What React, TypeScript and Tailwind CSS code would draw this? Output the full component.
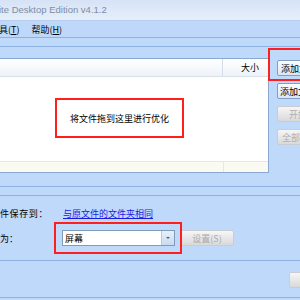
export default function App() {
  return (
    <div className="relative w-[300px] h-[300px] overflow-hidden bg-[#bfd9fb] text-[9px] leading-none text-black font-['Noto_Sans_CJK_SC',sans-serif]">
      {/* title bar */}
      <div className="h-[21px] flex items-center bg-gradient-to-b from-[#d6e3f6] to-[#e6eefa] border-b border-[#b5cdee] text-[#7f8da2] text-[9.5px] font-['Liberation_Sans',sans-serif]">
        <span className="-ml-px">ite Desktop Edition v4.1.2</span>
      </div>

      {/* menu bar */}
      <div className="h-[16px] flex items-center bg-[#bfd8f9]">
        <span className="-ml-px">具(<span className="underline">T</span>)</span>
        <span className="ml-[12px]">帮助(<span className="underline">H</span>)</span>
      </div>

      {/* toolbar separators */}
      <div className="h-[9px] border-t border-[#8fb1df]" />
      <div className="h-[12px] border-t border-[#8fb1df]" />

      {/* main area */}
      <div className="flex h-[115px]">
        <div className="w-[269px] shrink-0 flex flex-col bg-white border border-l-0 border-[#8aa8d0]">
          <div className="h-[18px] flex bg-gradient-to-b from-white to-[#eef3f9] border-b border-[#d8e0ea]">
            <div className="flex-1 border-r border-[#d5dde8]" />
            <div className="w-[45px] flex items-center justify-end pr-[9px]">大小</div>
          </div>
          <div className="relative flex-1">
            <div className="absolute left-[55px] top-[21px] w-[129px] h-[40px] border-2 border-[#ff1f1f] flex items-center justify-center text-[9px]">
              将文件拖到这里进行优化
            </div>
          </div>
          <div className="h-[11px] flex bg-[#fbfaf2] border-t border-[#ece7d6]">
            <div className="flex-1 border-r border-[#ece7d6]" />
            <div className="w-[44px]" />
          </div>
        </div>

        <div className="flex flex-col items-start gap-[7px] pl-[8px] pt-[2px]">
          <button className="shrink-0 h-[16px] w-[56px] flex items-center whitespace-nowrap pl-[3px] rounded-[2px] border border-[#7f9ec9] bg-gradient-to-b from-[#fbfdff] to-[#dbe6f4]">
            添加文件
          </button>
          <button className="shrink-0 h-[16px] w-[56px] flex items-center whitespace-nowrap pl-[2px] rounded-[2px] border border-[#7f9ec9] bg-gradient-to-b from-[#fbfdff] to-[#dbe6f4]">
            添加文件夹
          </button>
          <button className="shrink-0 h-[16px] w-[56px] flex items-center whitespace-nowrap pl-[11px] rounded-[2px] border border-[#c9cdd3] bg-gradient-to-b from-[#f6f6f6] to-[#d9d9d9] text-[#b0b0b0]">
            开始优化
          </button>
          <button className="shrink-0 h-[16px] w-[56px] flex items-center whitespace-nowrap pl-[4px] rounded-[2px] border border-[#c9cdd3] bg-gradient-to-b from-[#f6f6f6] to-[#d9d9d9] text-[#b0b0b0]">
            全部清除
          </button>
        </div>
      </div>

      {/* lower separators */}
      <div className="h-[13px]" />
      <div className="h-[9px] border-t border-[#8fb1df]" />
      <div className="border-t border-[#8fb1df]" />

      {/* save location */}
      <div className="h-[34px] flex items-center pt-[1px]">
        <span className="w-[63px] tracking-[0.6px]">件保存到：</span>
        <span className="text-[#1a1ae6] underline">与原文件的文件夹相同</span>
      </div>

      {/* output row */}
      <div className="h-[16px] flex items-center">
        <span className="w-[62px]">为：</span>
        <div className="w-[113px] h-[16px] flex items-center bg-white border border-[#7f9db9]">
          <span className="flex-1 pl-[2px]">屏幕</span>
          <div className="w-[13px] h-full flex items-center justify-center bg-gradient-to-b from-[#e8f0fb] to-[#c9daf2] border-l border-[#b6c9e4]">
            <div className="w-0 h-0 border-l-[2px] border-r-[2px] border-t-[2px] border-l-transparent border-r-transparent border-t-[#4d6185]" />
          </div>
        </div>
        <button className="ml-[5px] w-[54px] h-[16px] flex items-center justify-center rounded-[2px] border border-[#c9cdd3] bg-gradient-to-b from-[#f6f6f6] to-[#d9d9d9] text-[#aaaaaa]">
          设置(S)
        </button>
      </div>

      <div className="h-[14px]" />
      <div className="h-[12px] border-t border-[#8fb1df]" />
      <div className="flex justify-end">
        <div className="w-[11px] h-[16px] rounded-l-[2px] border border-r-0 border-[#c9cdd3] bg-gradient-to-b from-[#f6f6f6] to-[#d9d9d9]" />
      </div>
      <div className="h-[9px]" />
      <div className="border-t border-[#8fb1df]" />

      {/* red annotation boxes */}
      <div className="absolute left-[268px] top-[48px] w-[36px] h-[33px] border-2 border-[#ff1f1f]" />
      <div className="absolute left-[54px] top-[222px] w-[128px] h-[32px] border-2 border-[#ff1f1f]" />
    </div>
  );
}
